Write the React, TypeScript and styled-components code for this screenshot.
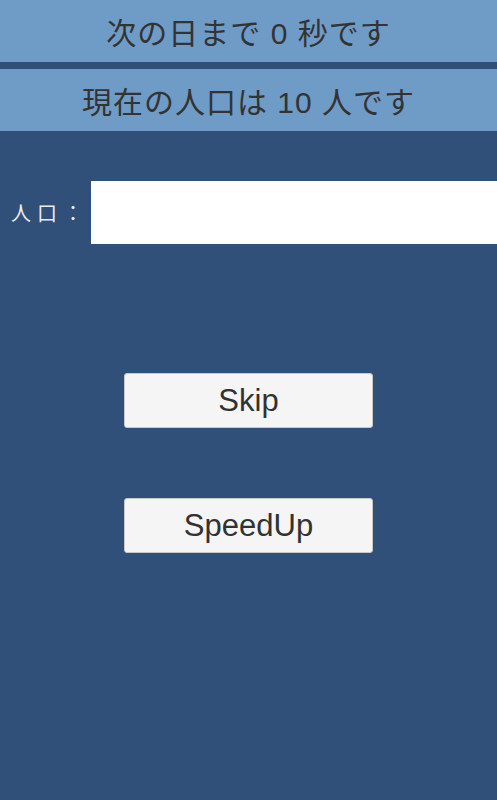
import React from "react"
import styled, { createGlobalStyle } from "styled-components"

const GlobalStyle = createGlobalStyle`
  html, body {
    margin: 0;
    padding: 0;
    background-color: #304f79;
  }
  body {
    font-family: "Liberation Sans", "Noto Sans CJK JP", sans-serif;
  }
`

const Screen = styled.div`
  width: 497px;
  height: 800px;
  overflow: hidden;
  background-color: #304f79;
  display: flex;
  flex-direction: column;
`

const Header = styled.div`
  display: flex;
  flex-direction: column;
  gap: 7px;
`

const InfoBar = styled.div`
  height: 62px;
  background-color: #6f9bc7;
  display: flex;
  align-items: center;
  justify-content: center;
  color: #333333;
  font-size: 30px;
  letter-spacing: 1px;
  white-space: pre;
`

const InputRow = styled.div`
  margin-top: 50px;
  height: 63px;
  display: flex;
  align-items: center;
`

const Label = styled.label`
  width: 91px;
  box-sizing: border-box;
  padding-left: 11px;
  color: #ececec;
  font-size: 20px;
  letter-spacing: 6px;
  white-space: nowrap;
`

const TextField = styled.input`
  flex: 1;
  height: 63px;
  box-sizing: border-box;
  border: none;
  outline: none;
  background-color: #ffffff;
  padding: 0 10px;
  font-family: inherit;
  font-size: 20px;
`

const ButtonStack = styled.div`
  margin-top: 129px;
  display: flex;
  flex-direction: column;
  align-items: center;
  gap: 70px;
`

const ActionButton = styled.button`
  width: 249px;
  height: 55px;
  box-sizing: border-box;
  background-color: #f5f5f5;
  border: 1px solid #c8c8c8;
  border-radius: 3px;
  color: #323232;
  font-family: "Liberation Sans", sans-serif;
  font-size: 31px;
  padding: 0;
  cursor: pointer;
`

export default function App() {
  return (
    <>
      <GlobalStyle />
      <Screen>
        <Header>
          <InfoBar>次の日まで 0 秒です</InfoBar>
          <InfoBar>現在の人口は 10 人です</InfoBar>
        </Header>
        <InputRow>
          <Label>人口：</Label>
          <TextField type="text" />
        </InputRow>
        <ButtonStack>
          <ActionButton>Skip</ActionButton>
          <ActionButton>SpeedUp</ActionButton>
        </ButtonStack>
      </Screen>
    </>
  )
}
